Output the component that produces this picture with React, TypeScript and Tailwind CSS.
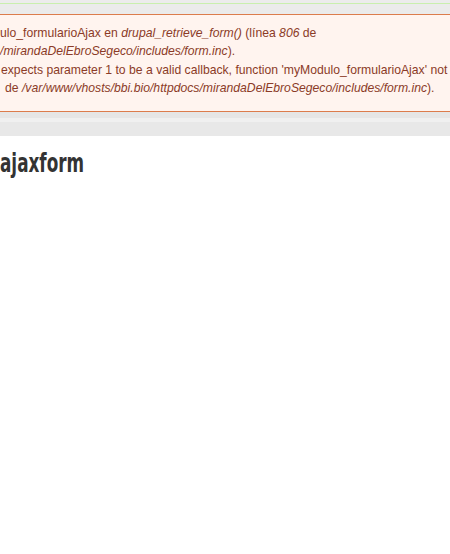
export default function App() {
  return (
    <div className="w-[450px] h-[554px] bg-white overflow-hidden">
      {/* top bar */}
      <div className="h-[3px] bg-[#ececec]" />
      <div className="h-px bg-[#c9efae]" />
      <div className="h-[10px] bg-[#ebebeb]" />

      {/* error messages */}
      <div className="border-y border-[#dc7c4c] bg-[#fff4ef] pt-[9px] pb-[14px] text-[12.2px] leading-[18.3px] text-[#8b3b27] whitespace-nowrap overflow-hidden font-['Liberation_Sans',Arial,sans-serif]">
        <div>
          ulo_formularioAjax en <em>drupal_retrieve_form()</em> (línea <em>806</em> de
        </div>
        <div>
          <em>/mirandaDelEbroSegeco/includes/form.inc</em>).
        </div>
        <div className="pl-px">
          expects parameter 1 to be a valid callback, function 'myModulo_formularioAjax' not found or invalid function name
        </div>
        <div className="pl-[5px]">
          de <em>/var/www/vhosts/bbi.bio/httpdocs/mirandaDelEbroSegeco/includes/form.inc</em>).
        </div>
      </div>

      {/* gray strip */}
      <div className="h-[6px] bg-[#e6e6e6]" />
      <div className="h-[4px] bg-[#f0f0f0]" />
      <div className="h-[14px] bg-[#e8e8e8]" />

      <h1 className="mt-[12px] text-[26px] leading-[30px] font-bold text-[#333333] font-stretch-condensed font-['DejaVu_Sans',sans-serif]">
        <span className="inline-block origin-left scale-x-[0.72]">ajaxform</span>
      </h1>
    </div>
  );
}
